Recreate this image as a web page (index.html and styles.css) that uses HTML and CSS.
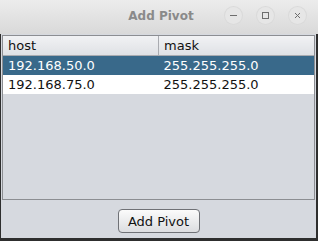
FILE: index.html
```html
<!DOCTYPE html>
<html lang="en">

<head>
    <meta charset="UTF-8">
    <title>Add Pivot</title>
    <link rel="stylesheet" href="styles.css">
</head>

<body>
    <div class="window">
        <div class="titlebar">
            <div></div>
            <div class="title">Add Pivot</div>
            <div class="controls">
                <span class="ctl">
                    <svg width="9" height="9" viewBox="0 0 9 9"><path d="M1 4.5h7" stroke="#6e6e6e" stroke-width="1"/></svg>
                </span>
                <span class="ctl">
                    <svg width="9" height="9" viewBox="0 0 9 9"><rect x="1.5" y="1.5" width="6" height="6" fill="none" stroke="#6e6e6e" stroke-width="1"/></svg>
                </span>
                <span class="ctl">
                    <svg width="9" height="9" viewBox="0 0 9 9"><path d="M2 2l5 5M7 2l-5 5" stroke="#6e6e6e" stroke-width="1"/></svg>
                </span>
            </div>
        </div>

        <div class="content">
            <div class="scroll">
                <table>
                    <tr class="head">
                        <th class="col1">host</th>
                        <th>mask</th>
                    </tr>
                    <tr class="selected">
                        <td>192.168.50.0</td>
                        <td>255.255.255.0</td>
                    </tr>
                    <tr>
                        <td>192.168.75.0</td>
                        <td>255.255.255.0</td>
                    </tr>
                </table>
            </div>
            <div class="actions">
                <button type="button">Add Pivot</button>
            </div>
        </div>
    </div>
</body>

</html>
```

FILE: styles.css
```css
body {
    margin: 0;
    font-family: "DejaVu Sans", sans-serif;
    font-size: 13px;
}

.window {
    width: 318px;
    height: 241px;
    display: flex;
    flex-direction: column;
    background-color: #d6d9df;
}

.titlebar {
    height: 34px;
    display: grid;
    grid-template-columns: 1fr auto 1fr;
    align-items: center;
    background: linear-gradient(#ececec, #d9d9d9);
}

.title {
    font-size: 12px;
    font-weight: bold;
    color: #8a8a8a;
    padding-left: 4px;
    padding-bottom: 2px;
}

.controls {
    display: flex;
    justify-content: flex-end;
    gap: 15px;
    padding-right: 12px;
    padding-bottom: 3px;
}

.ctl {
    width: 17px;
    height: 17px;
    border-radius: 50%;
    background-color: #e6e6e6;
    box-shadow: 0 0 0 1px #dadada;
    display: flex;
    justify-content: center;
    align-items: center;
}

.content {
    flex: 1;
    display: flex;
    flex-direction: column;
    border-left: 1px solid #2e2e2e;
    border-right: 2px solid #2e2e2e;
    border-bottom: 3px solid #2e2e2e;
    padding: 1px 1px 0 1px;
}

.scroll {
    height: 163px;
    border: 1px solid #8c8e92;
    background-color: #d6d9df;
}

table {
    width: 100%;
    border-collapse: collapse;
}

th {
    height: 19px;
    padding: 0 0 0 5px;
    text-align: left;
    font-weight: normal;
    color: #111;
    background: linear-gradient(#f1f2f4, #dfe1e5);
    border-bottom: 1px solid #a9abb0;
}

.col1 {
    width: 150px;
    border-right: 1px solid #a9abb0;
}

td {
    height: 19px;
    padding: 0 0 0 5px;
    background-color: #ffffff;
    color: #111;
}

.selected td {
    background-color: #39698a;
    color: #ffffff;
}

.actions {
    flex: 1;
    display: flex;
    justify-content: center;
    align-items: flex-start;
    padding-top: 9px;
}

button {
    font-family: "DejaVu Sans", sans-serif;
    font-size: 13px;
    color: #111;
    width: 82px;
    height: 24px;
    padding: 0;
    border: 1px solid #6f7176;
    border-radius: 4px;
    background: linear-gradient(#fbfbfb, #dcdde0);
}
```
